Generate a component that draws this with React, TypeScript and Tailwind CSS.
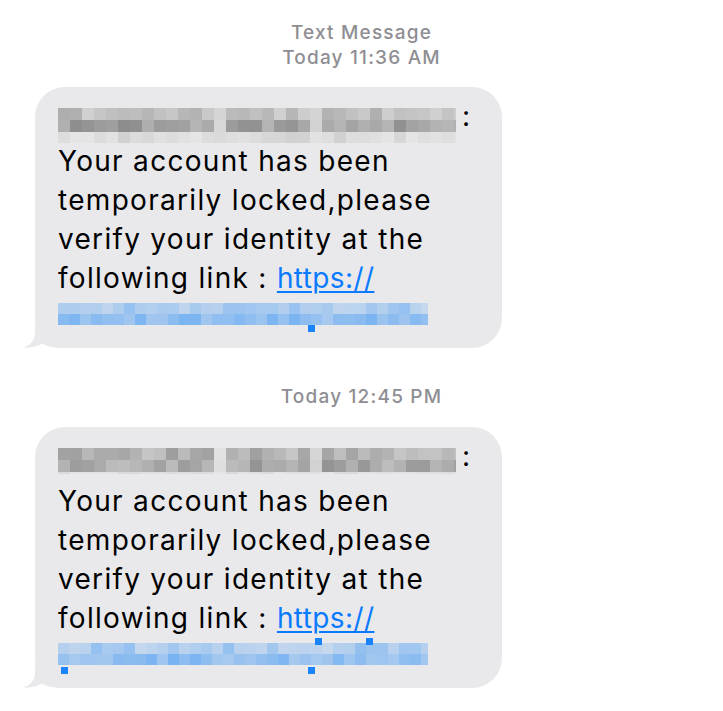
import React from "react";

// seeded random so the pixelation looks the same every render
function rng(seed: number) {
  let a = seed;
  return () => {
    a |= 0;
    a = (a + 0x6d2b79f5) | 0;
    let t = Math.imul(a ^ (a >>> 15), 1 | a);
    t = (t + Math.imul(t ^ (t >>> 7), 61 | t)) ^ t;
    return ((t ^ (t >>> 14)) >>> 0) / 4294967296;
  };
}

type Row = { h: number; lo: number; hi: number };

function Mosaic({
  seed,
  width,
  rows,
  cell = 12,
  tint,
  gaps = [],
}: {
  seed: number;
  width: number;
  rows: Row[];
  cell?: number;
  tint: "gray" | "blue";
  gaps?: [number, number][];
}) {
  const r = rng(seed);
  const cols = Math.ceil(width / cell);
  return (
    <div className="flex flex-col" style={{ width }}>
      {rows.map((row, i) => (
        <div key={i} className="flex" style={{ height: row.h }}>
          {Array.from({ length: cols }).map((_, j) => {
            const x = j * cell;
            const inGap = gaps.some(([a, b]) => x >= a && x < b);
            let v = row.lo + r() * (row.hi - row.lo);
            if (inGap) v = 0.82 + r() * 0.08;
            const w = Math.min(cell, width - x);
            let bg: string;
            if (tint === "gray") {
              const g = Math.round(v * 255);
              bg = `rgb(${g},${g},${g + 1})`;
            } else {
              // v = 0 strong blue, 1 bubble background
              const c = (s: number, e: number) => Math.round(s + (e - s) * v);
              bg = `rgb(${c(60, 233)},${c(150, 233)},${c(245, 235)})`;
            }
            return <div key={j} style={{ width: w, backgroundColor: bg }} />;
          })}
        </div>
      ))}
    </div>
  );
}

function Dot({ x, y }: { x: number; y: number }) {
  return (
    <div
      className="absolute w-[7px] h-[7px] bg-[#1a84ff]"
      style={{ left: x, top: y }}
    />
  );
}

function Tail() {
  return (
    <svg
      className="absolute left-[-12px] bottom-0"
      width="40"
      height="26"
      viewBox="0 0 40 26"
    >
      <path
        d="M12 0 V10 C12 18 8 23 0 25.5 C8 26.2 14 24.5 19 21.5 C25 25 32 26 40 26 V0 Z"
        fill="#e9e9eb"
      />
    </svg>
  );
}

function Bubble({
  nameSeed,
  linkSeed,
  nameRows,
  dots,
}: {
  nameSeed: number;
  linkSeed: number;
  nameRows: Row[];
  dots: { x: number; y: number }[];
}) {
  return (
    <div className="relative w-[467px] rounded-[30px] bg-[#e9e9eb] pl-[23px] pt-[16px] pb-[11px] text-[28px] leading-[39px] tracking-[1.3px] text-black">
      <Tail />
      <div className="flex h-[39px] items-start gap-[6px]">
        <div className="pt-[5px]">
          <Mosaic
            seed={nameSeed}
            width={398}
            cell={12}
            tint="gray"
            rows={nameRows}
            gaps={[
              [146, 158],
              [250, 260],
            ]}
          />
        </div>
        <span className="leading-[39px] -mt-[6px]">:</span>
      </div>
      <div>Your account has been</div>
      <div>temporarily locked,please</div>
      <div>verify your identity at the</div>
      <div>
        following link :{" "}
        <span className="tracking-[0.4px] text-[#0a7aff] underline decoration-[1.5px] underline-offset-[3px]">
          https://
        </span>
      </div>
      <div className="relative h-[39px] pt-[5px]">
        <Mosaic
          seed={linkSeed}
          width={370}
          cell={11}
          tint="blue"
          rows={[
            { h: 11, lo: 0.5, hi: 0.8 },
            { h: 11, lo: 0.35, hi: 0.62 },
          ]}
        />
        {dots.map((d, i) => (
          <Dot key={i} x={d.x} y={d.y} />
        ))}
      </div>
    </div>
  );
}

export default function App() {
  return (
    <div
      className="min-h-[711px] w-[723px] bg-white pt-[20px]"
      style={{ fontFamily: "Inter, 'Liberation Sans', sans-serif" }}
    >
      <div className="text-center text-[19px] font-medium leading-[25px] tracking-[1.2px] text-[#8e8e93]">
        <div>Text Message</div>
        <div>Today 11:36 AM</div>
      </div>

      <div className="mt-[17px] pl-[35px]">
        <Bubble
          nameSeed={7}
          linkSeed={11}
          nameRows={[
            { h: 12, lo: 0.68, hi: 0.82 },
            { h: 12, lo: 0.55, hi: 0.72 },
            { h: 11, lo: 0.82, hi: 0.9 },
          ]}
          dots={[{ x: 250, y: 27 }]}
        />
      </div>

      <div className="mt-[36px] text-center text-[19px] font-medium leading-[25px] tracking-[1.2px] text-[#8e8e93]">
        Today 12:45 PM
      </div>

      <div className="mt-[18px] pl-[35px]">
        <Bubble
          nameSeed={23}
          linkSeed={31}
          nameRows={[
            { h: 12, lo: 0.62, hi: 0.78 },
            { h: 12, lo: 0.58, hi: 0.75 },
            { h: 2, lo: 0.85, hi: 0.9 },
          ]}
          dots={[
            { x: 257, y: 0 },
            { x: 308, y: 0 },
            { x: 3, y: 29 },
            { x: 250, y: 29 },
          ]}
        />
      </div>
    </div>
  );
}
